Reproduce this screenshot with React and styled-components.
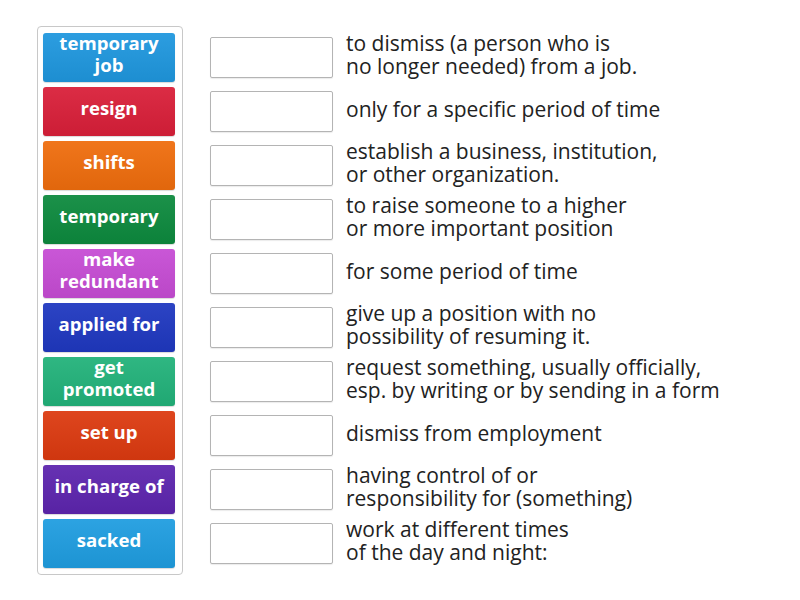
import React from "react";
import styled, { createGlobalStyle } from "styled-components";

const GlobalStyle = createGlobalStyle`
  body {
    margin: 0;
    background: #fff;
    font-family: "Open Sans", "Liberation Sans", sans-serif;
  }
`;

const Page = styled.div`
  display: flex;
  align-items: flex-start;
  padding: 26px 0 0 37px;
  gap: 27px;
`;

const Panel = styled.div`
  display: flex;
  flex-direction: column;
  gap: 5px;
  padding: 6px 7px 6px 5px;
  border: 1px solid #c8c8c8;
  border-radius: 4px;
`;

const Tile = styled.div`
  width: 132px;
  height: 49px;
  box-sizing: border-box;
  display: flex;
  align-items: center;
  justify-content: center;
  text-align: center;
  padding: 0 5px 8px;
  border-radius: 3px;
  background: ${(p) => p.color};
  background-image: linear-gradient(rgba(255, 255, 255, 0.06), rgba(0, 0, 0, 0.06));
  color: #fff;
  font-weight: 700;
  font-size: 18.6px;
  line-height: 22px;
  box-shadow: 0 1px 1px rgba(0, 0, 0, 0.15);
`;

const Answers = styled.div`
  display: flex;
  flex-direction: column;
  gap: 5px;
  padding-top: 7px;
`;

const Row = styled.div`
  display: flex;
  align-items: center;
  height: 49px;
  gap: 13px;
`;

const Slot = styled.div`
  width: 123px;
  height: 41px;
  box-sizing: border-box;
  border: 1px solid #b4b4b4;
  border-radius: 2px;
  background: #fff;
  box-shadow: 0 1px 1px rgba(0, 0, 0, 0.08);
`;

const Definition = styled.div`
  font-size: 21px;
  line-height: 23px;
  color: #222;
  white-space: pre-line;
  padding-bottom: 5px;
`;

const terms = [
  { label: "temporary job", color: "#1f97de" },
  { label: "resign", color: "#d91f39" },
  { label: "shifts", color: "#ef6d0d" },
  { label: "temporary", color: "#0d8a3e" },
  { label: "make redundant", color: "#c64cd4" },
  { label: "applied for", color: "#1f38c0" },
  { label: "get promoted", color: "#22b27a" },
  { label: "set up", color: "#dc3a10" },
  { label: "in charge of", color: "#5d25ae" },
  { label: "sacked", color: "#1f9de0" },
];

const definitions = [
  "to dismiss (a person who is\nno longer needed) from a job.",
  "only for a specific period of time",
  "establish a business, institution,\nor other organization.",
  "to raise someone to a higher\nor more important position",
  "for some period of time",
  "give up a position with no\npossibility of resuming it.",
  "request something, usually officially,\nesp. by writing or by sending in a form",
  "dismiss from employment",
  "having control of or\nresponsibility for (something)",
  "work at different times\nof the day and night:",
];

export default function App() {
  return (
    <>
      <GlobalStyle />
      <Page>
        <Panel>
          {terms.map((t) => (
            <Tile key={t.label} color={t.color}>
              {t.label}
            </Tile>
          ))}
        </Panel>
        <Answers>
          {definitions.map((d) => (
            <Row key={d}>
              <Slot />
              <Definition>{d}</Definition>
            </Row>
          ))}
        </Answers>
      </Page>
    </>
  );
}
